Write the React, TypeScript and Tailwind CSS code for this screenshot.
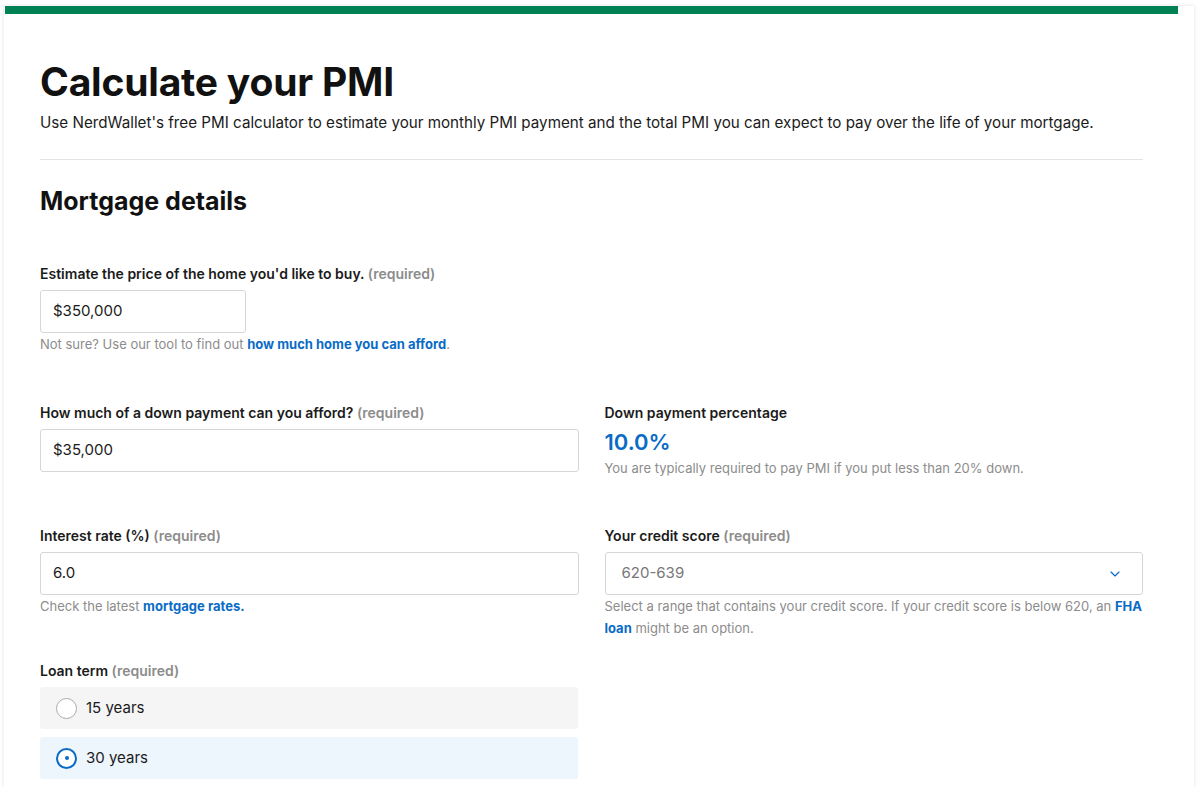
import { ChevronDown } from "lucide-react";

const font = { fontFamily: "Inter, 'Noto Sans', sans-serif" };

function Label({ text, required = true }: { text: string; required?: boolean }) {
    return (
        <div className="text-[14px] font-semibold text-[#1b1b1b] leading-5 mb-1.5">
            {text}
            {required && <span className="font-semibold text-[#8c8c8c]"> (required)</span>}
        </div>
    );
}

function Input({ value, className = "" }: { value: string; className?: string }) {
    return (
        <div className={`h-[43px] border border-[#d6d6d6] rounded-[3px] bg-white flex items-center px-3 text-[15px] text-[#1b1b1b] ${className}`}>
            {value}
        </div>
    );
}

export default function App() {
    return (
        <div className="bg-white min-h-[787px] pt-[6px] pl-[4px] pr-[6px]" style={font}>
            <div className="bg-white shadow-[0_0_4px_rgba(0,0,0,0.12)] min-h-[781px]">
                <div className="h-[8px] bg-[#008254] mr-[16px] ml-px" />
                <div className="pl-[36px] pr-[51px] pt-[44px]">
                    <h1 className="text-[39px] font-bold text-[#111] leading-[48px] tracking-[-0.2px]">Calculate your PMI</h1>
                    <p className="text-[15.2px] text-[#1b1b1b] mt-[5px] leading-6">
                        Use NerdWallet's free PMI calculator to estimate your monthly PMI payment and the total PMI you can expect to pay over the life of your mortgage.
                    </p>
                    <div className="border-t border-[#e3e3e3] mt-[24px]" />
                    <h2 className="text-[25px] font-bold text-[#111] mt-[25px] leading-8">Mortgage details</h2>

                    <div className="mt-[47px]">
                        <Label text="Estimate the price of the home you'd like to buy." />
                        <Input value="$350,000" className="w-[206px]" />
                        <p className="text-[13px] text-[#8c8c8c] mt-[1px] leading-5">
                            Not sure? Use our tool to find out{" "}
                            <a className="font-bold text-[#0a6bc6]">how much home you can afford</a>.
                        </p>
                    </div>

                    <div className="grid grid-cols-2 gap-x-[26px] mt-[49px]">
                        <div>
                            <Label text="How much of a down payment can you afford?" />
                            <Input value="$35,000" />
                        </div>
                        <div>
                            <Label text="Down payment percentage" required={false} />
                            <div className="text-[22px] font-semibold text-[#0a6bc6] leading-7 -mt-[1px]">10.0%</div>
                            <p className="text-[13px] text-[#8c8c8c] leading-5 mt-[2px]">
                                You are typically required to pay PMI if you put less than 20% down.
                            </p>
                        </div>
                    </div>

                    <div className="grid grid-cols-2 gap-x-[26px] mt-[48px]">
                        <div>
                            <Label text="Interest rate (%)" />
                            <Input value="6.0" />
                            <p className="text-[13px] text-[#8c8c8c] leading-[22px]">
                                Check the latest <a className="font-bold text-[#0a6bc6]">mortgage rates.</a>
                            </p>
                        </div>
                        <div>
                            <Label text="Your credit score" />
                            <div className="h-[43px] border border-[#d6d6d6] rounded-[3px] bg-white flex items-center justify-between px-4 text-[15px] text-[#777]">
                                <span>620-639</span>
                                <ChevronDown className="w-4 h-4 text-[#0a6bc6] mr-[3px]" strokeWidth={1.75} />
                            </div>
                            <p className="text-[13px] text-[#8c8c8c] leading-[22px]">
                                Select a range that contains your credit score. If your credit score is below 620, an{" "}
                                <a className="font-bold text-[#0a6bc6]">FHA</a>{" "}
                                <a className="font-bold text-[#0a6bc6]">loan</a> might be an option.
                            </p>
                        </div>
                    </div>

                    <div className="w-[538px] mt-[22px]">
                        <Label text="Loan term" />
                        <div className="h-[42px] rounded-[3px] bg-[#f5f5f5] flex items-center px-4 text-[15px] text-[#1b1b1b]">
                            <span className="w-[21px] h-[21px] rounded-full border-[1.5px] border-[#aaa] bg-white mr-[9px]" />
                            15 years
                        </div>
                        <div className="h-[42px] rounded-[3px] bg-[#edf5fd] flex items-center px-4 text-[15px] text-[#1b1b1b] mt-[8px]">
                            <span className="w-[21px] h-[21px] rounded-full border-2 border-[#0a6bc6] bg-white mr-[9px] flex items-center justify-center">
                                <span className="w-[4px] h-[4px] rounded-full bg-[#0a6bc6]" />
                            </span>
                            30 years
                        </div>
                    </div>
                </div>
            </div>
        </div>
    );
}
